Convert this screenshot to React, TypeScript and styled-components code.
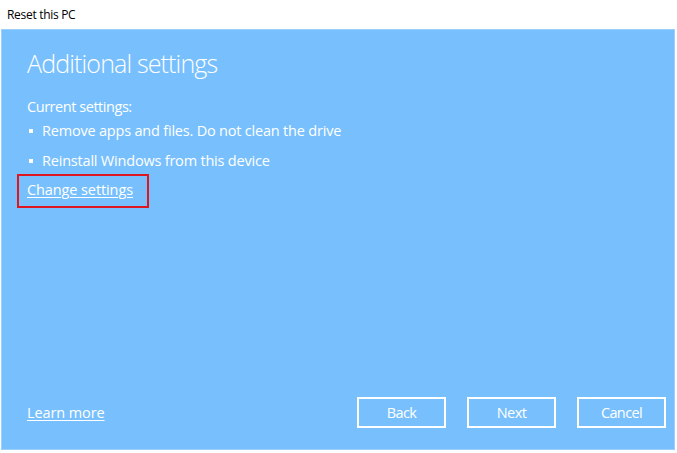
import styled, { createGlobalStyle } from "styled-components";

const GlobalStyle = createGlobalStyle`
  html, body {
    margin: 0;
    padding: 0;
    background: #ffffff;
  }
  #root {
    width: 677px;
    height: 453px;
  }
`;

const Window = styled.div`
  width: 677px;
  height: 453px;
  display: flex;
  flex-direction: column;
  background: #fbfdff;
  font-family: "Open Sans", "Noto Sans", sans-serif;
`;

const TitleBar = styled.div`
  height: 29px;
  flex: none;
  display: flex;
  align-items: center;
  padding-left: 7px;
  font-size: 12px;
  letter-spacing: -0.3px;
  color: #000;
  background: #ffffff;
`;

const Panel = styled.main`
  flex: 1;
  margin: 0 2px 3px 1px;
  background: #78c0fd;
  border: 1px solid #9ccffb;
  display: flex;
  flex-direction: column;
  justify-content: space-between;
  padding: 17px 8px 21px 25px;
  color: #ffffff;
`;

const Heading = styled.h1`
  margin: 0;
  font-size: 25px;
  line-height: 32px;
  font-weight: 300;
  letter-spacing: -0.85px;
`;

const Label = styled.div`
  margin-top: 18px;
  font-size: 14.5px;
  line-height: 20px;
  letter-spacing: -0.45px;
`;

const List = styled.ul`
  list-style: none;
  margin: 4px 0 0;
  padding: 0;
  display: flex;
  flex-direction: column;
  gap: 10px;
`;

const Item = styled.li`
  display: flex;
  align-items: center;
  font-size: 14.5px;
  line-height: 20px;
  letter-spacing: -0.2px;
  &::before {
    content: "";
    width: 4px;
    height: 4px;
    background: #ffffff;
    margin: 0 9px 0 2px;
    flex: none;
  }
`;

const Highlight = styled.div`
  align-self: flex-start;
  margin: 3px 0 0 -10px;
  padding: 2px 14px 6px 8px;
  border: 2px solid #e0161e;
`;

const TextLink = styled.a`
  color: #ffffff;
  font-size: 14.5px;
  line-height: 20px;
  letter-spacing: -0.1px;
  text-decoration: underline;
  text-underline-offset: 2px;
  cursor: pointer;
`;

const Footer = styled.footer`
  display: flex;
  align-items: center;
  justify-content: space-between;
`;

const Buttons = styled.div`
  display: flex;
  gap: 21px;
`;

const Button = styled.button`
  width: 89px;
  height: 31px;
  box-sizing: border-box;
  border: 2px solid #ffffff;
  background: transparent;
  color: #ffffff;
  font-family: "Open Sans", "Noto Sans", sans-serif;
  font-size: 14.5px;
  letter-spacing: -0.6px;
  padding: 0;
  cursor: pointer;
`;

const Top = styled.div`
  display: flex;
  flex-direction: column;
`;

export default function App() {
  return (
    <>
      <GlobalStyle />
      <Window>
        <TitleBar>Reset this PC</TitleBar>
        <Panel>
          <Top>
            <Heading>Additional settings</Heading>
            <Label>Current settings:</Label>
            <List>
              <Item>Remove apps and files. Do not clean the drive</Item>
              <Item>Reinstall Windows from this device</Item>
            </List>
            <Highlight>
              <TextLink>Change settings</TextLink>
            </Highlight>
          </Top>
          <Footer>
            <TextLink>Learn more</TextLink>
            <Buttons>
              <Button>Back</Button>
              <Button>Next</Button>
              <Button>Cancel</Button>
            </Buttons>
          </Footer>
        </Panel>
      </Window>
    </>
  );
}
